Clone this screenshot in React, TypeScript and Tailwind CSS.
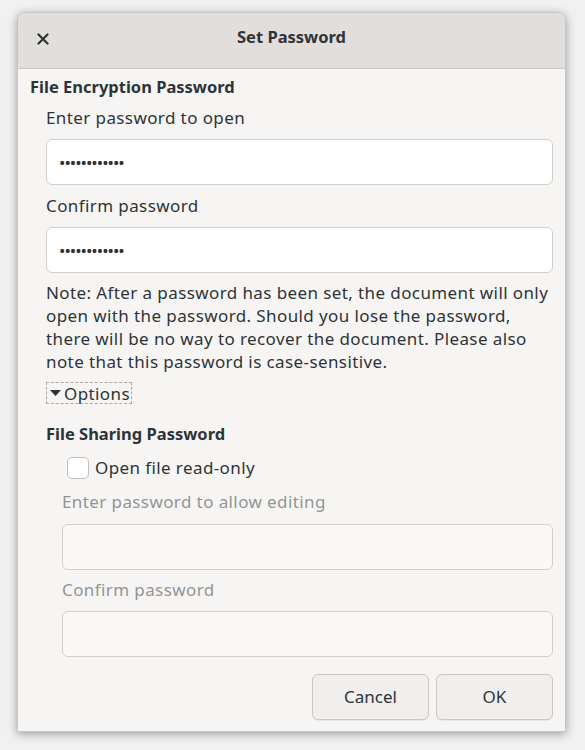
import React from 'react';

const font = { fontFamily: '"Noto Sans", "Open Sans", sans-serif' };

function Field({ value, disabled }: { value?: string; disabled?: boolean }) {
  return (
    <div
      className={`h-[46px] rounded-[6px] border border-[#d3cfcb] flex items-center px-3 ${
        disabled ? 'bg-[#faf9f8]' : 'bg-white'
      }`}
    >
      {value && <span className="text-[17px] tracking-[-1px] text-[#2e3436] leading-none">{value}</span>}
    </div>
  );
}

export default function App() {
  return (
    <div className="w-[585px] h-[750px] bg-[#f1f1f1] pt-[12px] pl-[17px]" style={font}>
      <div className="w-[549px] h-[720px] bg-[#f6f5f4] rounded-t-[8px] shadow-[0_2px_10px_rgba(0,0,0,0.35)] border border-[#c9c6c2] flex flex-col overflow-hidden">
        {/* header */}
        <div className="h-[56px] bg-[#e1dedb] border-b border-[#cdc9c5] relative flex items-center justify-center shrink-0 pb-[6px]">
          <svg width="12" height="12" viewBox="0 0 12 12" className="absolute left-[19px] top-[20px]">
            <path d="M1.5 1.5 L10.5 10.5 M10.5 1.5 L1.5 10.5" stroke="#2e3436" strokeWidth="2.2" strokeLinecap="round" />
          </svg>
          <span className="text-[16.5px] font-bold text-[#2e3436]">Set Password</span>
        </div>

        <div className="flex flex-col text-[17px] tracking-[0.4px] text-[#2e3436] pl-[12px] pr-[12px]">
          <div className="font-bold tracking-normal text-[16.5px] mt-[6px] h-[24px] leading-[24px]">File Encryption Password</div>
          <div className="pl-[16px] flex flex-col">
            <div className="h-[24px] leading-[24px] mt-[7px]">Enter password to open</div>
            <div className="mt-[9px]"><Field value="••••••••••••" /></div>
            <div className="h-[24px] leading-[24px] mt-[9px]">Confirm password</div>
            <div className="mt-[9px]"><Field value="••••••••••••" /></div>
            <p className="mt-[8px] leading-[23px]">
              Note: After a password has been set, the document will only open with the password. Should you lose the password, there will be no way to recover the document. Please also note that this password is case-sensitive.
            </p>
            <div className="mt-[9px] h-[22px] flex">
              <div className="flex items-center border border-dashed border-[#aaa] pr-[1px] leading-none">
                <svg width="16" height="10" viewBox="0 0 16 10" className="ml-[1px]">
                  <path d="M2 2 L13 2 L7.5 8 Z" fill="#2e3436" />
                </svg>
                <span>Options</span>
              </div>
            </div>
            <div className="font-bold tracking-normal text-[16.5px] mt-[18px] h-[24px] leading-[24px]">File Sharing Password</div>
            <div className="pl-[21px] mt-[9px] flex items-center">
              <div className="w-[22px] h-[22px] rounded-[5px] border border-[#c5c0bb] bg-white" />
              <span className="ml-[6px]">Open file read-only</span>
            </div>
            <div className="pl-[16px] flex flex-col">
              <div className="h-[24px] leading-[24px] mt-[9px] text-[#929595]">Enter password to allow editing</div>
              <div className="mt-[10px]"><Field disabled /></div>
              <div className="h-[24px] leading-[24px] mt-[8px] text-[#929595]">Confirm password</div>
              <div className="mt-[9px]"><Field disabled /></div>
            </div>
            <div className="flex justify-end gap-[7px] mt-[17px]">
              <button className="w-[117px] h-[46px] rounded-[6px] border border-[#cdc7c2] bg-[#f0efed] text-[#2e3436] tracking-normal shadow-[0_1px_0_rgba(0,0,0,0.05)]">Cancel</button>
              <button className="w-[117px] h-[46px] rounded-[6px] border border-[#cdc7c2] bg-[#f0efed] text-[#2e3436] tracking-normal shadow-[0_1px_0_rgba(0,0,0,0.05)]">OK</button>
            </div>
          </div>
        </div>
      </div>
    </div>
  );
}
